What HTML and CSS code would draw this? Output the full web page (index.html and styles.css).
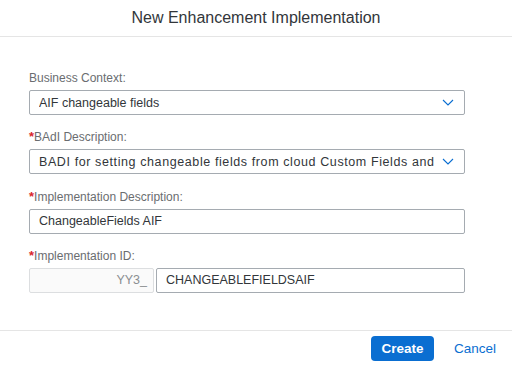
FILE: index.html
```html
<!DOCTYPE html>
<html lang="en">
<head>
  <meta charset="UTF-8" />
  <title>New Enhancement Implementation</title>
  <link rel="stylesheet" href="styles.css">
</head>
<body>
  <div class="dialog">
    <div class="dialog-header">New Enhancement Implementation</div>
    <div class="dialog-content">
      <div class="field">
        <div class="field-label">Business Context:</div>
        <div class="select">
          <span class="select-text">AIF changeable fields</span>
          <svg class="chevron" width="12" height="7" viewBox="0 0 12 7"><path d="M1 1l5 5 5-5" fill="none" stroke="#0a6ed1" stroke-width="1.1"/></svg>
        </div>
      </div>
      <div class="field">
        <div class="field-label"><span class="req">*</span>BAdI Description:</div>
        <div class="select">
          <span class="select-text wide">BADI for setting changeable fields from cloud Custom Fields and</span>
          <svg class="chevron" width="12" height="7" viewBox="0 0 12 7"><path d="M1 1l5 5 5-5" fill="none" stroke="#0a6ed1" stroke-width="1.1"/></svg>
        </div>
      </div>
      <div class="field">
        <div class="field-label"><span class="req">*</span>Implementation Description:</div>
        <div class="input">ChangeableFields AIF</div>
      </div>
      <div class="field">
        <div class="field-label"><span class="req">*</span>Implementation ID:</div>
        <div class="id-row">
          <div class="input prefix">YY3_</div>
          <div class="input id-input">CHANGEABLEFIELDSAIF</div>
        </div>
      </div>
    </div>
    <div class="dialog-footer">
      <button class="btn btn-primary">Create</button>
      <button class="btn btn-text">Cancel</button>
    </div>
  </div>
</body>
</html>
```

FILE: styles.css
```css
body {
  margin: 0;
  padding: 0;
  font-family: "Liberation Sans", Arial, sans-serif;
  background: #fff;
  color: #32363a;
}
.dialog {
  width: 512px;
  height: 366px;
  display: flex;
  flex-direction: column;
  background: #fff;
}
.dialog-header {
  height: 36px;
  line-height: 36px;
  text-align: center;
  font-size: 16px;
  color: #32363a;
  border-bottom: 1px solid #e5e5e5;
  flex: none;
}
.dialog-content {
  flex: 1;
  padding: 33px 47px 0 29px;
  display: flex;
  flex-direction: column;
  gap: 14.34px;
}
.field-label {
  height: 16px;
  line-height: 16px;
  font-size: 12px;
  color: #6a6d70;
  margin-bottom: 4px;
}
.req {
  color: #d9262b;
  font-weight: bold;
  font-size: 13px;
}
.select,
.input {
  box-sizing: border-box;
  height: 25px;
  border: 1px solid #a5abb1;
  border-radius: 2px;
  background: #fff;
  font-size: 12.5px;
  color: #32363a;
  display: flex;
  align-items: center;
  padding: 0 9px;
  white-space: nowrap;
  overflow: hidden;
}
.select {
  padding-right: 0;
}
.select-text {
  flex: 1;
  overflow: hidden;
  white-space: nowrap;
}
.select-text.wide {
  letter-spacing: 0.6px;
}
.chevron {
  flex: none;
  width: 30px;
  padding: 0 10px 0 8px;
  box-sizing: border-box;
}
.id-row {
  display: flex;
  gap: 2px;
}
.prefix {
  width: 125px;
  flex: none;
  justify-content: flex-end;
  padding-right: 6px;
  background: #fafafa;
  border-color: #dcdee0;
  color: #8b8e91;
}
.id-input {
  flex: 1;
}
.dialog-footer {
  height: 36px;
  flex: none;
  box-sizing: border-box;
  border-top: 1px solid #e5e5e5;
  display: flex;
  align-items: center;
  justify-content: flex-end;
  gap: 12px;
  padding: 0 8px 0 0;
}
.btn {
  font-family: "Liberation Sans", Arial, sans-serif;
  font-size: 13.5px;
  height: 25px;
  border-radius: 4px;
  border: none;
  cursor: pointer;
}
.btn-primary {
  width: 63px;
  background: #0a6ed1;
  color: #fff;
  font-weight: bold;
}
.btn-text {
  background: transparent;
  color: #0a6ed1;
  padding: 0 8px;
}
```
